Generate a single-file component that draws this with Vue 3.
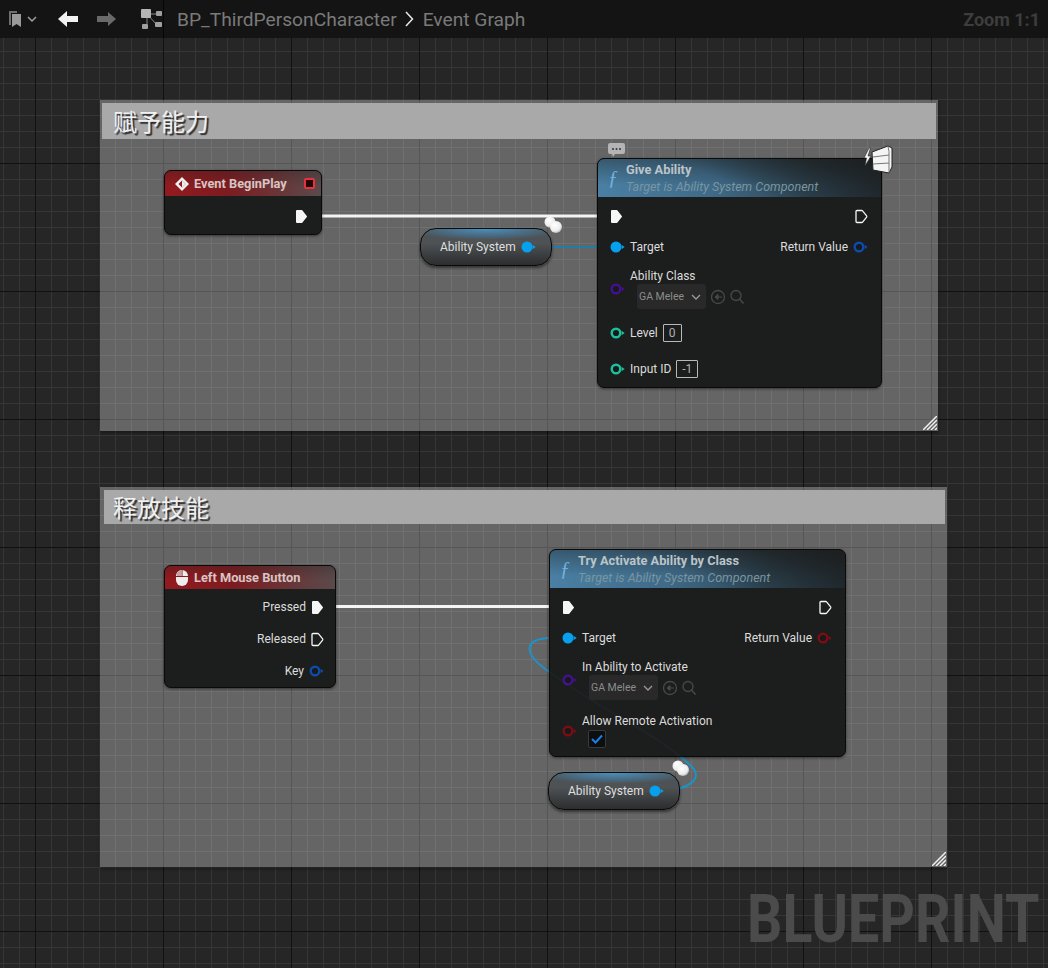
<script setup>
const comments = [
  { id: 'c1', title: '赋予能力' },
  { id: 'c2', title: '释放技能' }
]
</script>

<template>
  <div class="editor">
    <svg class="defs" width="0" height="0">
      <symbol id="exec-on" viewBox="0 0 13 15"><path d="M2 2h4.700l4.300 5.500L6.700 13H2v-11z" fill="currentColor" stroke="currentColor" stroke-width="2" stroke-linejoin="round" /></symbol>
      <symbol id="exec-off" viewBox="0 0 13 15"><path d="M2 1.500h4.800a1 1 0 0 1 .8.400l4 5a1 1 0 0 1 0 1.200l-4 5a1 1 0 0 1-.8.400H2a1 1 0 0 1-1-1v-10a1 1 0 0 1 1-1z" fill="none" stroke="currentColor" stroke-width="1.300" /></symbol>
      <symbol id="pin-on" viewBox="0 0 15 12"><circle cx="6" cy="6" r="5.500" fill="currentColor" /><path d="M11.600 3.800 14.600 6l-3 2.200z" fill="currentColor" /></symbol>
      <symbol id="pin-off" viewBox="0 0 15 12"><circle cx="6" cy="6" r="4.300" fill="#17191a" stroke="currentColor" stroke-width="2.400" /><path d="M11.600 3.800 14.600 6l-3 2.200z" fill="currentColor" /></symbol>
    </svg>

    <header class="topbar">
      <svg class="bookmark" width="14" height="18" viewBox="0 0 14 18">
        <path d="M1 1h8v2H3v12H1z" fill="#6e6e6e" />
        <path d="M4 4h9v13l-4.500-3L4 17z" fill="#9a9a9a" />
      </svg>
      <svg class="caret" width="10" height="7" viewBox="0 0 10 7"><path d="M1 1l4 4 4-4" fill="none" stroke="#a0a0a0" stroke-width="1.500" /></svg>
      <svg class="arrow" width="20" height="16" viewBox="0 0 20 16"><path d="M0 8l9-8v5h11v6H9v5z" fill="#f2f2f2" /></svg>
      <svg class="arrow next" width="19" height="14" viewBox="0 0 19 14"><path d="M19 7l-8-7v4H0v6h11v4z" fill="#6a6a6a" /></svg>
      <svg class="graph-icon" width="21" height="20" viewBox="0 0 21 20">
        <path d="M6 5l12 0M6 5l10 11M6 5v10" stroke="#8a8a8a" stroke-width="1" fill="none" />
        <rect x="0" y="0" width="10" height="9" rx="1" fill="#b5b5b5" />
        <rect x="15" y="2" width="6" height="5" rx="1" fill="#a0a0a0" />
        <rect x="14" y="13" width="7" height="5" rx="1" fill="#a0a0a0" />
        <rect x="1" y="15" width="6" height="5" rx="1" fill="#a0a0a0" />
      </svg>
      <span class="crumb">BP_ThirdPersonCharacter</span>
      <svg class="crumb-sep" width="9" height="16" viewBox="0 0 9 16"><path d="M1 1l6.500 7L1 15" fill="none" stroke="#e8e8e8" stroke-width="1.500" /></svg>
      <span class="crumb">Event Graph</span>
      <span class="zoom-label">Zoom 1:1</span>
    </header>

    <div class="watermark">BLUEPRINT</div>

    <section v-for="c in comments" :key="c.id" class="comment" :class="c.id">
      <div class="comment-title">{{ c.title }}</div>
      <svg class="resizer" width="14" height="14" viewBox="0 0 14 14">
        <path d="M0 14L14 0M4 14L14 4M8 14l6-6M12 14l2-2" stroke="#f0f0f0" stroke-width="1.500" />
      </svg>
    </section>

    <svg class="wires" width="1048" height="968">
      <path d="M308 216H610" stroke="#f4f4f4" stroke-width="3" fill="none" />
      <path d="M532 247H610" stroke="#0b86b8" stroke-width="1.500" fill="none" />
      <path d="M324 606.500H562" stroke="#f4f4f4" stroke-width="3" fill="none" />
      <path d="M660 791C690 790 704 778 691 766C660 735 600 710 548 671C525 655 522 640 548 638" stroke="#1b93c9" stroke-width="2" fill="none" />
    </svg>

    <div class="node event n-begin">
      <div class="node-head red">
        <svg width="14" height="14" viewBox="0 0 16 16"><path d="M8 0l8 8-8 8-8-8z" fill="#f0f0f0" /><path d="M8 4L4 8l4 4 4-4z" fill="#8a1b20" /><path d="M8 4l4 4-4 4z" fill="#f0f0f0" /></svg>
        <span class="head-title">Event BeginPlay</span>
        <span class="delegate"></span>
      </div>
      <div class="rows begin-rows">
        <div class="row end"><svg class="exec"><use href="#exec-on" /></svg></div>
      </div>
    </div>

    <div class="var n-var1">
      <span>Ability System</span>
      <svg class="pin sky"><use href="#pin-on" /></svg>
    </div>

    <div class="node n-give">
      <div class="node-head blue">
        <span class="fn">ƒ</span>
        <div>
          <div class="head-title">Give Ability</div>
          <div class="head-sub">Target is Ability System Component</div>
        </div>
      </div>
      <div class="rows">
        <div class="row between">
          <svg class="exec"><use href="#exec-on" /></svg>
          <svg class="exec"><use href="#exec-off" /></svg>
        </div>
        <div class="row between">
          <span class="pin-label"><svg class="pin sky"><use href="#pin-on" /></svg>Target</span>
          <span class="pin-label">Return Value<svg class="pin navy"><use href="#pin-off" /></svg></span>
        </div>
        <div class="row tall">
          <svg class="pin violet"><use href="#pin-off" /></svg>
          <div>
            <div class="label">Ability Class</div>
            <div class="class-picker">
              <span class="dropdown">GA Melee
                <svg width="10" height="6" viewBox="0 0 10 6"><path d="M1 1l4 4 4-4" fill="none" stroke="#9a9a9a" stroke-width="1.300" /></svg>
              </span>
              <svg width="34" height="16" viewBox="0 0 34 16">
                <circle cx="7" cy="8" r="6.500" fill="none" stroke="#484848" stroke-width="1.300" />
                <path d="M11 8H5M7 5.500L4 8l3 2.500z" stroke="#484848" fill="#484848" />
                <circle cx="25" cy="6.500" r="5" fill="none" stroke="#484848" stroke-width="1.300" />
                <path d="M28.500 10l4 4.500" stroke="#484848" stroke-width="1.500" />
              </svg>
            </div>
          </div>
        </div>
        <div class="row wide">
          <span class="pin-label"><svg class="pin teal"><use href="#pin-off" /></svg>Level<span class="num">0</span></span>
        </div>
        <div class="row wide">
          <span class="pin-label"><svg class="pin teal"><use href="#pin-off" /></svg>Input ID<span class="num">-1</span></span>
        </div>
      </div>
      <svg class="bubble" width="17" height="14" viewBox="0 0 17 14">
        <path d="M2 0h13a2 2 0 0 1 2 2v7a2 2 0 0 1-2 2H7l-2 3-1-3H2a2 2 0 0 1-2-2V2a2 2 0 0 1 2-2z" fill="#b4b4b4" />
        <circle cx="5" cy="6" r="1" fill="#333" /><circle cx="8.500" cy="6" r="1" fill="#333" /><circle cx="12" cy="6" r="1" fill="#333" />
      </svg>
      <svg class="server" width="30" height="29" viewBox="0 0 30 29">
        <path d="M6 3L1 13h2.500L2 21l6-10H5l2.500-8z" fill="#f4f4f4" stroke="#222" stroke-width=".6" />
        <path d="M9 7L25 1l4 2v19l-3 6-16-3z" fill="#f4f4f4" stroke="#222" stroke-width="1" />
        <path d="M25 1.500l1 5v21M10 12l16-2M10 19l16-1" stroke="#777" stroke-width="1" fill="none" />
      </svg>
    </div>

    <div class="node event n-mouse">
      <div class="node-head red">
        <svg width="12" height="16" viewBox="0 0 12 16"><rect x="0" y="0" width="12" height="16" rx="6" fill="#eee" /><path d="M0 6.500h12M6 0v6" stroke="#8a1b20" stroke-width="1" /><path d="M1 6V5a5 5 0 0 1 4.500-5v6z" fill="#c9a0a0" /></svg>
        <span class="head-title">Left Mouse Button</span>
      </div>
      <div class="rows mouse-rows">
        <div class="row end"><span class="pin-label">Pressed<svg class="exec"><use href="#exec-on" /></svg></span></div>
        <div class="row end"><span class="pin-label">Released<svg class="exec"><use href="#exec-off" /></svg></span></div>
        <div class="row end"><span class="pin-label">Key<svg class="pin navy"><use href="#pin-off" /></svg></span></div>
      </div>
    </div>

    <div class="node n-try">
      <div class="node-head blue">
        <span class="fn">ƒ</span>
        <div>
          <div class="head-title">Try Activate Ability by Class</div>
          <div class="head-sub">Target is Ability System Component</div>
        </div>
      </div>
      <div class="rows">
        <div class="row between">
          <svg class="exec"><use href="#exec-on" /></svg>
          <svg class="exec"><use href="#exec-off" /></svg>
        </div>
        <div class="row between">
          <span class="pin-label"><svg class="pin sky"><use href="#pin-on" /></svg>Target</span>
          <span class="pin-label">Return Value<svg class="pin maroon"><use href="#pin-off" /></svg></span>
        </div>
        <div class="row tall">
          <svg class="pin violet"><use href="#pin-off" /></svg>
          <div>
            <div class="label">In Ability to Activate</div>
            <div class="class-picker">
              <span class="dropdown">GA Melee
                <svg width="10" height="6" viewBox="0 0 10 6"><path d="M1 1l4 4 4-4" fill="none" stroke="#9a9a9a" stroke-width="1.300" /></svg>
              </span>
              <svg width="34" height="16" viewBox="0 0 34 16">
                <circle cx="7" cy="8" r="6.500" fill="none" stroke="#484848" stroke-width="1.300" />
                <path d="M11 8H5M7 5.500L4 8l3 2.500z" stroke="#484848" fill="#484848" />
                <circle cx="25" cy="6.500" r="5" fill="none" stroke="#484848" stroke-width="1.300" />
                <path d="M28.500 10l4 4.500" stroke="#484848" stroke-width="1.500" />
              </svg>
            </div>
          </div>
        </div>
        <div class="row remote">
          <svg class="pin maroon"><use href="#pin-off" /></svg>
          <div>
            <div class="label">Allow Remote Activation</div>
            <span class="check">
              <svg width="12" height="10" viewBox="0 0 12 10"><path d="M1 5l3.500 3.500L11 1.500" fill="none" stroke="#1a7fe8" stroke-width="2" /></svg>
            </span>
          </div>
        </div>
      </div>
    </div>

    <div class="var n-var2">
      <span>Ability System</span>
      <svg class="pin sky"><use href="#pin-on" /></svg>
    </div>

    <svg class="wires top" width="1048" height="968">
      <path d="M691 766C660 735 600 710 548 671" stroke="#1b93c9" stroke-width="1.500" fill="none" opacity=".06" />
      <defs>
        <radialGradient id="blob" cx=".4" cy=".35" r=".7">
          <stop offset="0" stop-color="#ffffff" />
          <stop offset=".7" stop-color="#ececec" />
          <stop offset="1" stop-color="#a8a8a8" />
        </radialGradient>
      </defs>
      <circle cx="550" cy="222" r="5.500" fill="url(#blob)" />
      <circle cx="556" cy="227" r="6" fill="url(#blob)" />
      <circle cx="678" cy="766" r="5.500" fill="url(#blob)" />
      <circle cx="683" cy="770" r="6" fill="url(#blob)" />
    </svg>
  </div>
</template>

<style>
body {
  margin: 0;
  background: #272727;
}
</style>

<style scoped>
.editor {
  position: relative;
  width: 1048px;
  height: 968px;
  overflow: hidden;
  font-family: Roboto, "Noto Sans", sans-serif;
  font-size: 12px;
  color: #dcdcdc;
  background-color: #262626;
  background-image:
    linear-gradient(#111 0 1px, transparent 1px),
    linear-gradient(90deg, #111 0 1px, transparent 1px),
    linear-gradient(#363636 0 1px, transparent 1px),
    linear-gradient(90deg, #363636 0 1px, transparent 1px);
  background-size: 128px 128px, 128px 128px, 16px 16px, 16px 16px;
  background-position: 0 35px, 35px 0, 0 3px, 3px 0;
}
.defs {
  position: absolute;
}

.topbar {
  display: flex;
  align-items: center;
  height: 38px;
  padding: 0 8px;
  box-sizing: border-box;
  background: #141414;
  position: relative;
}
.topbar::after {
  content: "";
  position: absolute;
  left: 163px;
  top: 0;
  bottom: 0;
  width: 1px;
  background: #060606;
}
.caret { margin-left: 5px; }
.arrow { margin-left: 21px; }
.arrow.next { margin-left: 19px; }
.graph-icon { margin: 0 15px 0 25px; }
.crumb {
  font-size: 19.200px;
  color: #7a7a7a;
  position: relative;
  z-index: 1;
}
.crumb-sep { margin: 0 9px 0 8px; }
.zoom-label {
  margin-left: auto;
  font-size: 18px;
  font-weight: 700;
  color: #3d3d3d;
}

.watermark {
  position: absolute;
  left: 747px;
  top: 882px;
  font-size: 66px;
  line-height: 76px;
  font-weight: 700;
  color: #4b4b4b;
  transform: scaleX(0.84);
  transform-origin: left center;
}

.comment {
  position: absolute;
  box-sizing: border-box;
  padding: 3px 2px;
  background: rgba(255, 255, 255, 0.29);
  box-shadow: 0 2px 3px rgba(0, 0, 0, 0.35);
}
.c1 { left: 100px; top: 100px; width: 838px; height: 331px; }
.c2 { left: 100px; top: 487px; width: 847px; height: 380px; }
.comment-title {
  height: 36px;
  padding-left: 11px;
  font-family: "Noto Sans CJK SC", sans-serif;
  font-size: 24px;
  line-height: 36px;
  color: #f0f0f0;
  background: #a9a9a9;
  text-shadow: 2px 2px 1px #2c2c2c;
}
.c2 .comment-title {
  height: 34px;
  line-height: 34px;
  margin-left: 2px;
  padding-left: 9px;
}
.resizer {
  position: absolute;
  right: 1px;
  bottom: 1px;
}

.wires {
  position: absolute;
  left: 0;
  top: 0;
}
.wires.top { pointer-events: none; }

.node {
  position: absolute;
  box-sizing: border-box;
  background: #1c1e1e;
  border: 1px solid #0a0a0a;
  border-radius: 7px;
  box-shadow: 0 1px 3px rgba(0, 0, 0, 0.5);
}
.n-begin { left: 164px; top: 170px; width: 158px; height: 65px; }
.n-give { left: 597px; top: 158px; width: 285px; height: 230px; }
.n-mouse { left: 164px; top: 565px; width: 172px; height: 123px; }
.n-try { left: 549px; top: 549px; width: 297px; height: 208px; }

.node-head {
  display: flex;
  align-items: center;
  gap: 6px;
  box-sizing: border-box;
  border-radius: 6px 6px 0 0;
}
.node-head.red {
  height: 25px;
  padding: 0 6px 0 10px;
  gap: 5px;
  background:
    linear-gradient(180deg, rgba(28, 30, 30, 0.25), rgba(28, 30, 30, 0) 60%),
    linear-gradient(90deg, #931a1f 0%, #7c1c20 40%, #5a4a4b 100%);
}
.n-mouse .node-head.red {
  height: 23px;
  padding-left: 11px;
  gap: 6px;
}
.node-head.blue {
  height: 38px;
  padding: 0 0 0 10px;
  background:
    linear-gradient(200deg, rgba(28, 30, 30, 0.95) 0%, rgba(28, 30, 30, 0) 55%),
    linear-gradient(180deg, rgba(28, 30, 30, 0.4), rgba(28, 30, 30, 0) 70%),
    linear-gradient(90deg, #4a80a4 0%, #3f6a88 40%, #2c4453 75%, #24333d 100%);
}
.head-title {
  font-size: 12.800px;
  font-weight: 700;
  color: #bcc4c8;
}
.red .head-title { color: #d8c4c4; }
.head-sub {
  margin-top: 2px;
  font-size: 12.500px;
  font-style: italic;
  color: #7a959f;
}
.fn {
  width: 12px;
  font-family: "Liberation Serif", serif;
  font-size: 20px;
  font-style: italic;
  color: #72b2e0;
}
.delegate {
  width: 7px;
  height: 7px;
  margin-left: auto;
  margin-top: -1px;
  background: #200608;
  border: 2px solid #e8313d;
  border-radius: 2px;
}

.rows { padding: 4px 13px 0 12px; }
.row {
  display: flex;
  align-items: center;
  height: 31px;
}
.rows > .row.between:first-child { height: 30px; }
.row.between { justify-content: space-between; }
.row.end { justify-content: flex-end; }
.row.tall { height: 53px; gap: 5px; }
.row.wide { height: 36px; }
.row.remote { height: 49px; gap: 5px; }
.begin-rows { padding-top: 5px; padding-right: 13px; }
.mouse-rows { padding: 2px 11px 0 12px; }
.mouse-rows .row { height: 32px; }

.pin-label {
  display: flex;
  align-items: center;
  gap: 5px;
  color: #dcdcdc;
}
.exec {
  width: 13px;
  height: 15px;
  color: #f6f6f6;
}
.pin {
  width: 15px;
  height: 12px;
  flex: none;
}
.sky { color: #06a0ee; }
.navy { color: #0c4ba8; }
.violet { color: #43118f; }
.teal { color: #1cc09a; }
.maroon { color: #7c0d14; }

.label { line-height: 16px; }
.class-picker {
  display: flex;
  align-items: center;
  gap: 5px;
  margin: 0 0 0 7px;
}
.dropdown {
  display: inline-flex;
  align-items: center;
  gap: 7px;
  height: 25px;
  padding: 0 5px 0 2px;
  font-size: 10.500px;
  color: #8c8c8c;
  background: #282928;
  border-radius: 3px;
}
.num {
  display: inline-block;
  box-sizing: border-box;
  min-width: 18px;
  height: 18px;
  padding: 0 5px;
  line-height: 16px;
  text-align: center;
  color: #b0b0b0;
  border: 1px solid #b8b8b8;
  border-radius: 1px;
}
.check {
  display: flex;
  align-items: center;
  justify-content: center;
  width: 16px;
  height: 16px;
  margin: 1px 0 0 6px;
  background: #0c0e10;
  border: 1px solid #3a3a3a;
  border-radius: 2px;
}
.bubble {
  position: absolute;
  left: 10px;
  top: -16px;
}
.server {
  position: absolute;
  right: -12px;
  top: -14px;
}

.var {
  position: absolute;
  display: flex;
  align-items: center;
  gap: 5px;
  box-sizing: border-box;
  width: 132px;
  height: 38px;
  padding-left: 19px;
  color: #dfdfdf;
  border: 1px solid #0a0a0a;
  border-radius: 16px;
  background:
    radial-gradient(ellipse 60% 30% at 50% 0, rgba(70, 150, 205, 0.9), rgba(70, 150, 205, 0) 100%),
    linear-gradient(180deg, #4b5358 0%, #4e5254 40%, #2b2d2e 100%);
  box-shadow: 0 2px 3px rgba(0, 0, 0, 0.5);
}
.n-var1 { left: 420px; top: 228px; }
.n-var2 { left: 548px; top: 772px; }
</style>
